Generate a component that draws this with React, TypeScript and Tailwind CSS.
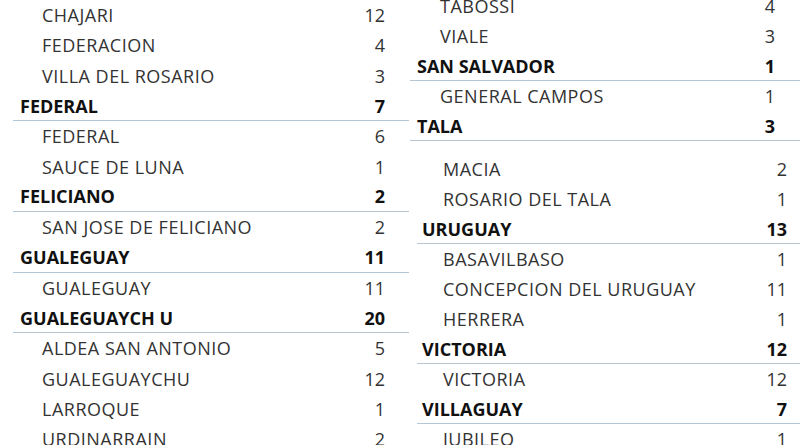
type Row = { name: string; value: number; head?: boolean };

const left: Row[] = [
  { name: "CHAJARI", value: 12 },
  { name: "FEDERACION", value: 4 },
  { name: "VILLA DEL ROSARIO", value: 3 },
  { name: "FEDERAL", value: 7, head: true },
  { name: "FEDERAL", value: 6 },
  { name: "SAUCE DE LUNA", value: 1 },
  { name: "FELICIANO", value: 2, head: true },
  { name: "SAN JOSE DE FELICIANO", value: 2 },
  { name: "GUALEGUAY", value: 11, head: true },
  { name: "GUALEGUAY", value: 11 },
  { name: "GUALEGUAYCH U", value: 20, head: true },
  { name: "ALDEA SAN ANTONIO", value: 5 },
  { name: "GUALEGUAYCHU", value: 12 },
  { name: "LARROQUE", value: 1 },
  { name: "URDINARRAIN", value: 2 },
];

const rightTop: Row[] = [
  { name: "TABOSSI", value: 4 },
  { name: "VIALE", value: 3 },
  { name: "SAN SALVADOR", value: 1, head: true },
  { name: "GENERAL CAMPOS", value: 1 },
  { name: "TALA", value: 3, head: true },
];

const rightBottom: Row[] = [
  { name: "MACIA", value: 2 },
  { name: "ROSARIO DEL TALA", value: 1 },
  { name: "URUGUAY", value: 13, head: true },
  { name: "BASAVILBASO", value: 1 },
  { name: "CONCEPCION DEL URUGUAY", value: 11 },
  { name: "HERRERA", value: 1 },
  { name: "VICTORIA", value: 12, head: true },
  { name: "VICTORIA", value: 12 },
  { name: "VILLAGUAY", value: 7, head: true },
  { name: "JUBILEO", value: 1 },
];

type RowProps = { row: Row; h: string; headPad: string; subPad: string; numRight: string };

function TableRow({ row, h, headPad, subPad, numRight }: RowProps) {
  if (row.head) {
    return (
      <div className={`flex items-center justify-between border-b border-[#b4c7d6] font-bold text-[#111] ${h} ${headPad} ${numRight}`}>
        <span>{row.name}</span>
        <span>{row.value}</span>
      </div>
    );
  }
  return (
    <div className={`flex items-center justify-between text-[#333] ${h} ${subPad} ${numRight}`}>
      <span className="tracking-[0.5px]">{row.name}</span>
      <span>{row.value}</span>
    </div>
  );
}

export default function App() {
  return (
    <div className="flex h-[445px] w-[800px] overflow-hidden bg-white font-['Open_Sans',sans-serif] text-[18px] leading-none">
      {/* left column */}
      <div className="w-[409px] shrink-0 pl-[13px]">
        {left.map((r, i) => (
          <TableRow key={i} row={r} h="h-[30.3px]" headPad="pl-[7px]" subPad="pl-[29px]" numRight="pr-[24px]" />
        ))}
      </div>
      {/* right column, scrolled up a little */}
      <div className="flex-1 -mt-[9px]">
        <div className="pl-[1px]">
          {rightTop.map((r, i) => (
            <TableRow key={i} row={r} h="h-[30px]" headPad="pl-[7px]" subPad="pl-[30px]" numRight="pr-[25px]" />
          ))}
        </div>
        <div className="h-[13px]" />
        <div className="pl-[8px]">
          {rightBottom.map((r, i) => (
            <TableRow key={i} row={r} h="h-[30px]" headPad="pl-[5px]" subPad="pl-[26px]" numRight="pr-[13px]" />
          ))}
        </div>
      </div>
    </div>
  );
}
